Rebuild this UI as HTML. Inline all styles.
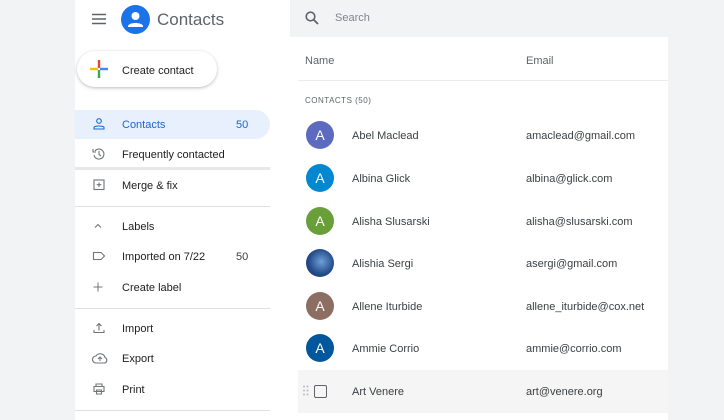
<!DOCTYPE html>
<html><head><style>
*{margin:0;padding:0;box-sizing:border-box}
body{width:724px;height:420px;overflow:hidden;background:#f1f3f4;font-family:"Liberation Sans",Arial,sans-serif;color:#3c4043;position:relative}
.side{position:absolute;left:75px;top:0;width:215px;height:420px;background:#fff}
.abs{position:absolute}
.item{position:absolute;left:47px;font-size:11px;color:#202124;margin-top:1px}
.ic{position:absolute;left:17px}
.hr{position:absolute;left:0;width:195px;height:1px;background:#e0e0e0}
.main{position:absolute;left:290px;top:37px;width:378px;height:383px;background:#fff}
.row{position:absolute;left:8px;width:370px;height:43px}
.av{position:absolute;left:8px;top:7px;width:28px;height:28px;border-radius:50%;color:#fff;font-size:14px;text-align:center;line-height:28px}
.nm{position:absolute;left:54px;top:16px;font-size:11px;color:#3c4043}
.em{position:absolute;left:228px;top:16px;font-size:11px;color:#3c4043}
svg.ic path,svg.ic rect,svg.ic circle{stroke:#70757a}
</style></head><body>
<div class="side">
 <svg class="abs" style="left:17px;top:13px" width="14" height="12"><path d="M0 1.5h14M0 6h14M0 10.5h14" stroke="#5f6368" stroke-width="1.6"/></svg>
 <svg class="abs" style="left:46px;top:5px" width="29" height="29"><circle cx="14.5" cy="14.5" r="14.5" fill="#1a73e8"/><circle cx="14.5" cy="11" r="4" fill="#fff"/><path d="M7 21c1-4 14-4 15 0v1H7z" fill="#fff"/></svg>
 <div class="abs" style="left:82px;top:10px;font-size:17px;color:#5f6368">Contacts</div>
 <div class="abs" style="left:2px;top:51px;width:140px;height:36px;border-radius:18px;background:#fff;box-shadow:0 1px 3px rgba(60,64,67,.35)"></div>
 <svg class="abs" style="left:15px;top:60px" width="18" height="18"><path d="M9 0v8" stroke="#ea4335" stroke-width="2.4"/><path d="M9 10v8" stroke="#34a853" stroke-width="2.4"/><path d="M0 9h8" stroke="#fbbc04" stroke-width="2.4"/><path d="M10 9h8" stroke="#4285f4" stroke-width="2.4"/></svg>
 <div class="item" style="top:64px">Create contact</div>
 <div class="abs" style="left:0;top:110px;width:195px;height:29px;background:#e8f0fe;border-radius:0 15px 15px 0"></div>
 <svg class="abs" style="left:17px;top:117px" width="14" height="14"><circle cx="7" cy="4" r="2.3" fill="none" stroke="#1967d2" stroke-width="1.1"/><path d="M2 12v-1.5c0-2 10-2 10 0V12z" fill="none" stroke="#1967d2" stroke-width="1.1"/></svg>
 <div class="item" style="top:118px;color:#1967d2">Contacts</div>
 <div class="item" style="top:118px;left:161px;color:#1967d2">50</div>
 <svg class="ic" style="top:147px" width="14" height="14"><path d="M3 4a5 5 0 1 1-1 4" fill="none" stroke-width="1.1"/><path d="M1 2v3h3" fill="none" stroke-width="1.1"/><path d="M7 4v3.5l2 1.5" fill="none" stroke-width="1.1"/></svg>
 <div class="item" style="top:148px">Frequently contacted</div>
 <div class="abs" style="left:0;top:167px;width:195px;height:3px;background:#e8e8e8"></div>
 <svg class="ic" style="top:178px" width="14" height="14"><rect x="2" y="2" width="10" height="9.5" fill="none" stroke-width="1.1"/><path d="M7 4.5v4.5M4.7 6.7h4.6" stroke-width="1.1"/></svg>
 <div class="item" style="top:179px">Merge &amp; fix</div>
 <div class="hr" style="top:206px"></div>
 <svg class="ic" style="top:221px" width="12" height="10"><path d="M3 6.5l3-3 3 3" fill="none" stroke-width="1.1"/></svg>
 <div class="item" style="top:220px">Labels</div>
 <svg class="ic" style="top:250px" width="14" height="12"><path d="M1.5 2.5h7.5l3.5 3.5-3.5 3.5H1.5z" fill="none" stroke-width="1.1"/></svg>
 <div class="item" style="top:250px">Imported on 7/22</div>
 <div class="item" style="top:250px;left:161px;color:#3c4043">50</div>
 <svg class="ic" style="top:281px" width="12" height="12"><path d="M6 1.5v9M1.5 6h9" stroke-width="1"/></svg>
 <div class="item" style="top:281px">Create label</div>
 <div class="hr" style="top:308px"></div>
 <svg class="ic" style="top:321px" width="14" height="14"><path d="M7 9.5V2.5M4.5 5L7 2.5 9.5 5M2 9v2.5h10V9" fill="none" stroke-width="1.1"/></svg>
 <div class="item" style="top:322px">Import</div>
 <svg class="ic" style="top:351px" width="16" height="14"><path d="M4 12a3.5 3.5 0 0 1 0-7 5 5 0 0 1 9 1.5 3 3 0 0 1 0 5.5z" fill="none" stroke-width="1.1"/><path d="M8 10V6M6 8l2-2 2 2" fill="none" stroke-width="1"/></svg>
 <div class="item" style="top:352px">Export</div>
 <svg class="ic" style="top:382px" width="14" height="14"><path d="M4 4V2h6V4M2 4.5h10v5H2zM4.5 8h5v4h-5z" fill="none" stroke-width="1.1"/></svg>
 <div class="item" style="top:383px">Print</div>
 <div class="hr" style="top:410px"></div>
</div>
<div class="abs" style="left:290px;top:0;width:380px;height:37px;background:#f1f3f4;border-radius:0 0 0 8px"></div>
<svg class="abs" style="left:305px;top:11px" width="14" height="14"><circle cx="5.5" cy="5.5" r="4.3" fill="none" stroke="#5f6368" stroke-width="1.6"/><path d="M8.7 8.7L13 13" stroke="#5f6368" stroke-width="1.8"/></svg>
<div class="abs" style="left:335px;top:12px;font-size:11px;color:#80868b">Search</div>
<div class="main">
 <div class="abs" style="left:15px;top:18px;font-size:11px;color:#5f6368">Name</div>
 <div class="abs" style="left:236px;top:18px;font-size:11px;color:#5f6368">Email</div>
 <div class="abs" style="left:8px;top:43px;width:370px;height:1px;background:#ececec"></div>
 <div class="abs" style="left:15px;top:59px;font-size:8px;letter-spacing:.5px;color:#5f6368">CONTACTS (50)</div>
 <div class="row" style="top:77px"><div class="av" style="background:#5c6bc0">A</div><div class="nm">Abel Maclead</div><div class="em">amaclead@gmail.com</div></div>
 <div class="row" style="top:120px"><div class="av" style="background:#0288d1">A</div><div class="nm">Albina Glick</div><div class="em">albina@glick.com</div></div>
 <div class="row" style="top:163px"><div class="av" style="background:#689f38">A</div><div class="nm">Alisha Slusarski</div><div class="em">alisha@slusarski.com</div></div>
 <div class="row" style="top:205px"><div class="av" style="background:radial-gradient(circle at 55% 45%,#6f9fd8,#274f8f 55%,#0f2a55)"></div><div class="nm">Alishia Sergi</div><div class="em">asergi@gmail.com</div></div>
 <div class="row" style="top:248px"><div class="av" style="background:#8d6e63">A</div><div class="nm">Allene Iturbide</div><div class="em">allene_iturbide@cox.net</div></div>
 <div class="row" style="top:290px"><div class="av" style="background:#01579b">A</div><div class="nm">Ammie Corrio</div><div class="em">ammie@corrio.com</div></div>
 <div class="row" style="top:333px;background:#f5f5f5"><svg class="abs" style="left:5px;top:15px" width="6" height="12"><g fill="#bbb"><circle cx="1" cy="1.5" r="1"/><circle cx="4.5" cy="1.5" r="1"/><circle cx="1" cy="5.5" r="1"/><circle cx="4.5" cy="5.5" r="1"/><circle cx="1" cy="9.5" r="1"/><circle cx="4.5" cy="9.5" r="1"/></g></svg><div class="abs" style="left:16px;top:15px;width:13px;height:13px;border:1.5px solid #5f6368;border-radius:2px"></div><div class="nm">Art Venere</div><div class="em">art@venere.org</div></div>
</div>
</body></html>
